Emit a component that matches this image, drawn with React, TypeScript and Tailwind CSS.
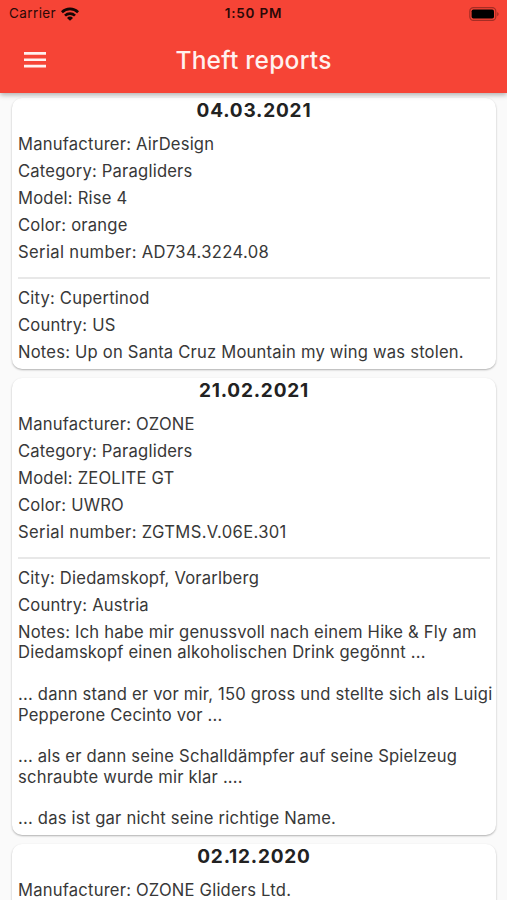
import React from 'react';
import clsx from 'clsx';

interface Report {
  date: string;
  item: string[];
  place: string[];
  notes: string;
}

const reports: Report[] = [
  {
    date: '04.03.2021',
    item: [
      'Manufacturer: AirDesign',
      'Category: Paragliders',
      'Model: Rise 4',
      'Color: orange',
      'Serial number: AD734.3224.08',
    ],
    place: ['City: Cupertinod', 'Country: US'],
    notes: 'Notes: Up on Santa Cruz Mountain my wing was stolen.',
  },
  {
    date: '21.02.2021',
    item: [
      'Manufacturer: OZONE',
      'Category: Paragliders',
      'Model: ZEOLITE GT',
      'Color: UWRO',
      'Serial number: ZGTMS.V.06E.301',
    ],
    place: ['City: Diedamskopf, Vorarlberg', 'Country: Austria'],
    notes: `Notes: Ich habe mir genussvoll nach einem Hike & Fly am
Diedamskopf einen alkoholischen Drink gegönnt ...

... dann stand er vor mir, 150 gross und stellte sich als Luigi
Pepperone Cecinto vor ...

... als er dann seine Schalldämpfer auf seine Spielzeug
schraubte wurde mir klar ....

... das ist gar nicht seine richtige Name.`,
  },
  {
    date: '02.12.2020',
    item: ['Manufacturer: OZONE Gliders Ltd.'],
    place: [],
    notes: '',
  },
];

const StatusBar: React.FC = () => (
  <div className="grid h-[27px] grid-cols-3 items-center px-[7px] text-[#2b0907]">
    <div className="flex items-center gap-[5px] pl-[2px]">
      <span className="text-[13.5px] tracking-[0.4px]">Carrier</span>
      <svg viewBox="0 0 18 14" className="h-[14px] w-[18px]" fill="none" stroke="#160605" strokeWidth="2.7">
        <path d="M.9 5.2a11.5 11.5 0 0 1 16.2 0" />
        <path d="M4 8.6a7.1 7.1 0 0 1 10 0" />
        <path d="M9 13.8 6 10.9a4.1 4.1 0 0 1 6 0z" fill="#160605" stroke="none" />
      </svg>
    </div>
    <span className="text-center text-[13.5px] font-semibold tracking-[0.8px]">1:50 PM</span>
    <svg viewBox="0 0 31 14" className="h-[14px] w-[31px] justify-self-end">
      <rect x="0.8" y="0.6" width="26" height="12.8" rx="3.6" fill="none" stroke="#a52d24" strokeWidth="1.2" />
      <rect x="2.6" y="2.4" width="22.4" height="9.2" rx="1.8" fill="#000" />
      <path d="M28.2 5v4.2c2-.8 2-3.4 0-4.2z" fill="#a52d24" />
    </svg>
  </div>
);

const ReportCard: React.FC<{ report: Report }> = ({ report }) => (
  <article className="rounded-[10px] bg-white px-[6px] pb-[6px] shadow-[0_1px_2px_rgba(0,0,0,0.3)]">
    <h2 className="h-[33px] pt-[1px] text-center text-[19px] leading-[24px] font-bold tracking-[0.8px] text-[#222]">
      {report.date}
    </h2>
    {report.item.map((line) => (
      <p
        key={line}
        className={clsx('h-[27px] leading-[27px]', line.startsWith('Serial') && 'tracking-[0.35px]')}
      >
        {line}
      </p>
    ))}
    {report.place.length > 0 && <hr className="mt-[11px] mb-[6px] border-t-2 border-[#e8e8e8]" />}
    {report.place.map((line) => (
      <p key={line} className="h-[27px] leading-[27px]">
        {line}
      </p>
    ))}
    <p className="pt-[3px] leading-[20.7px] whitespace-pre">{report.notes}</p>
  </article>
);

const App: React.FC = () => (
  <div className="flex h-[900px] w-[507px] flex-col overflow-hidden bg-[#fafafa] font-[Inter,sans-serif] text-[#383838]">
    <header className="relative z-10 h-[93px] shrink-0 bg-[#f64436] shadow-[0_2px_5px_rgba(0,0,0,0.3)]">
      <StatusBar />
      <div className="grid h-[66px] grid-cols-[70px_1fr_70px] items-center text-[#fff1ef]">
        <button aria-label="Menu" className="pl-[24px]">
          <svg viewBox="0 0 22 16" className="h-[16px] w-[22px]" fill="currentColor">
            <path d="M0 0h22v2.7H0zM0 6.4h22v2.7H0zM0 12.8h22v2.7H0z" />
          </svg>
        </button>
        <h1 className="text-center text-[24.5px] font-medium tracking-[0.25px]">Theft reports</h1>
      </div>
    </header>
    <main className="flex flex-col gap-[9px] pt-[5px] pr-[11px] pl-[12px] text-[16.6px] tracking-[0.2px]">
      {reports.map((report) => (
        <ReportCard key={report.date} report={report} />
      ))}
    </main>
  </div>
);

export default App;
